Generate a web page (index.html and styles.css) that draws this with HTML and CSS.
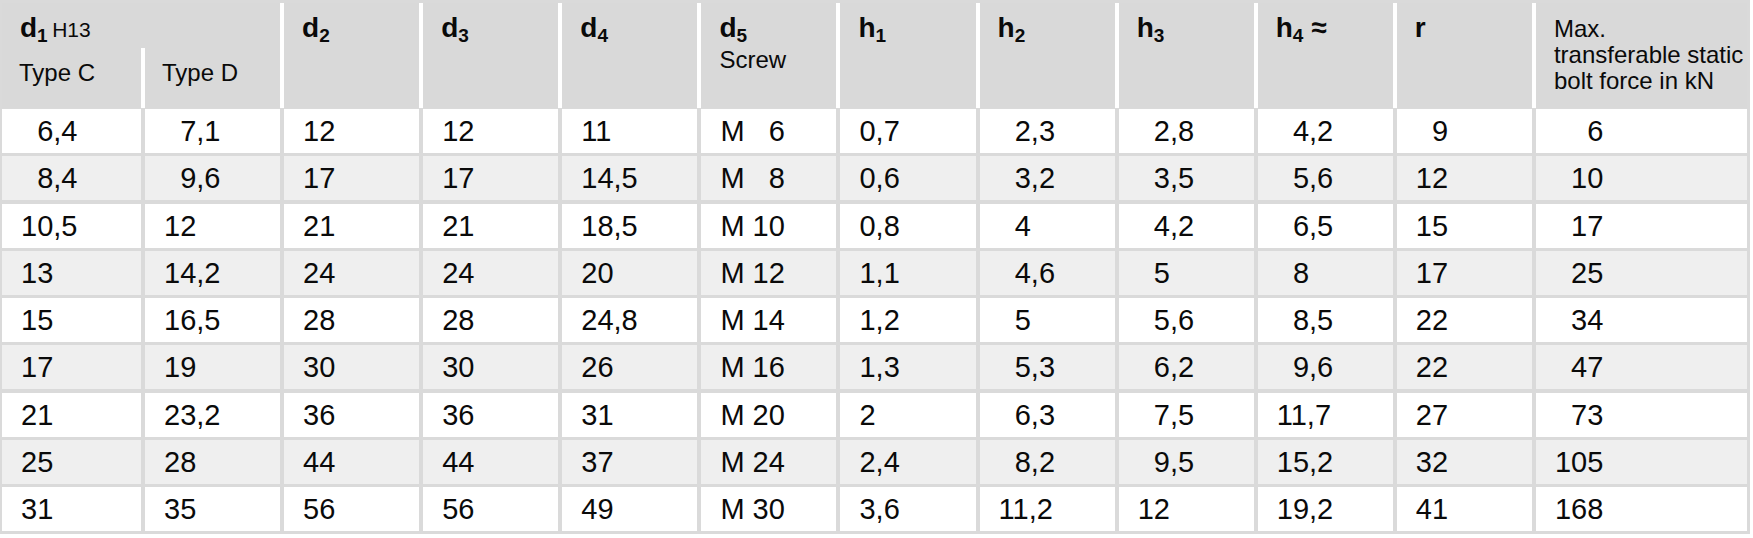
FILE: index.html
```html
<!DOCTYPE html>
<html>
<head>
<meta charset="utf-8">
<link rel="stylesheet" href="styles.css">
</head>
<body>
<div class="tbl">
  <div class="head">
    <div class="hc d1"><span class="lab">d<sub>1</sub></span> <span class="note">H13</span></div>
    <div class="hc sub1">Type C</div>
    <div class="hc sub2">Type D</div>
    <div class="hc tall"><span class="lab">d<sub>2</sub></span></div>
    <div class="hc tall"><span class="lab">d<sub>3</sub></span></div>
    <div class="hc tall"><span class="lab">d<sub>4</sub></span></div>
    <div class="hc tall"><span class="lab">d<sub>5</sub></span><div class="small">Screw</div></div>
    <div class="hc tall"><span class="lab">h<sub>1</sub></span></div>
    <div class="hc tall"><span class="lab">h<sub>2</sub></span></div>
    <div class="hc tall"><span class="lab">h<sub>3</sub></span></div>
    <div class="hc tall"><span class="lab">h<sub class="s4">4</sub> ≈</span></div>
    <div class="hc tall"><span class="lab">r</span></div>
    <div class="hc tall"><div class="small multi">Max.<br>transferable static<br>bolt force in kN</div></div>
  </div>
  <div class="body">
    <div class="c">&#8199;6,4</div><div class="c">&#8199;7,1</div><div class="c">12</div><div class="c">12</div><div class="c">11</div><div class="c">M&#8199; 6</div><div class="c">0,7</div><div class="c">&#8199;2,3</div><div class="c">&#8199;2,8</div><div class="c">&#8199;4,2</div><div class="c">&#8199;9</div><div class="c">&#8199;&#8199;6</div>

    <div class="c a">&#8199;8,4</div><div class="c a">&#8199;9,6</div><div class="c a">17</div><div class="c a">17</div><div class="c a">14,5</div><div class="c a">M&#8199; 8</div><div class="c a">0,6</div><div class="c a">&#8199;3,2</div><div class="c a">&#8199;3,5</div><div class="c a">&#8199;5,6</div><div class="c a">12</div><div class="c a">&#8199;10</div>

    <div class="c">10,5</div><div class="c">12</div><div class="c">21</div><div class="c">21</div><div class="c">18,5</div><div class="c">M 10</div><div class="c">0,8</div><div class="c">&#8199;4</div><div class="c">&#8199;4,2</div><div class="c">&#8199;6,5</div><div class="c">15</div><div class="c">&#8199;17</div>

    <div class="c a">13</div><div class="c a">14,2</div><div class="c a">24</div><div class="c a">24</div><div class="c a">20</div><div class="c a">M 12</div><div class="c a">1,1</div><div class="c a">&#8199;4,6</div><div class="c a">&#8199;5</div><div class="c a">&#8199;8</div><div class="c a">17</div><div class="c a">&#8199;25</div>

    <div class="c">15</div><div class="c">16,5</div><div class="c">28</div><div class="c">28</div><div class="c">24,8</div><div class="c">M 14</div><div class="c">1,2</div><div class="c">&#8199;5</div><div class="c">&#8199;5,6</div><div class="c">&#8199;8,5</div><div class="c">22</div><div class="c">&#8199;34</div>

    <div class="c a">17</div><div class="c a">19</div><div class="c a">30</div><div class="c a">30</div><div class="c a">26</div><div class="c a">M 16</div><div class="c a">1,3</div><div class="c a">&#8199;5,3</div><div class="c a">&#8199;6,2</div><div class="c a">&#8199;9,6</div><div class="c a">22</div><div class="c a">&#8199;47</div>

    <div class="c">21</div><div class="c">23,2</div><div class="c">36</div><div class="c">36</div><div class="c">31</div><div class="c">M 20</div><div class="c">2</div><div class="c">&#8199;6,3</div><div class="c">&#8199;7,5</div><div class="c">11,7</div><div class="c">27</div><div class="c">&#8199;73</div>

    <div class="c a">25</div><div class="c a">28</div><div class="c a">44</div><div class="c a">44</div><div class="c a">37</div><div class="c a">M 24</div><div class="c a">2,4</div><div class="c a">&#8199;8,2</div><div class="c a">&#8199;9,5</div><div class="c a">15,2</div><div class="c a">32</div><div class="c a">105</div>

    <div class="c">31</div><div class="c">35</div><div class="c">56</div><div class="c">56</div><div class="c">49</div><div class="c">M 30</div><div class="c">3,6</div><div class="c">11,2</div><div class="c">12</div><div class="c">19,2</div><div class="c">41</div><div class="c">168</div>
  </div>
</div>
</body>
</html>
```

FILE: styles.css
```css
html, body {
  margin: 0;
  padding: 0;
  background: #ffffff;
}

body {
  font-family: "Liberation Sans", Arial, sans-serif;
  color: #0a0a0a;
}

.tbl {
  width: 1750px;
  box-sizing: border-box;
  padding: 3px 3px 3px 2px;
  background: #dadada;
}

.head {
  display: grid;
  grid-template-columns: 139px repeat(10, 135.1px) 211px;
  grid-template-rows: 45px 60px;
  column-gap: 4px;
  background: #ffffff;
}

.hc {
  background: #d9d9d9;
  padding: 10px 0 0 18px;
  box-sizing: border-box;
  line-height: 30px;
}

.hc.d1 {
  grid-column: 1 / 3;
  grid-row: 1;
}

.hc.sub1 {
  grid-column: 1;
  grid-row: 2;
}

.hc.sub2 {
  grid-column: 2;
  grid-row: 2;
}

.hc.sub1, .hc.sub2 {
  padding-top: 13px;
  padding-left: 17px;
  font-size: 24px;
  line-height: 24px;
}

.hc.tall {
  grid-row: 1 / 3;
}

.lab {
  font-weight: bold;
  font-size: 28px;
}

.lab sub {
  font-size: 19px;
  line-height: 0;
  vertical-align: -5px;
}

.note {
  font-size: 21px;
}

.small {
  font-size: 24px;
  line-height: 26px;
}

.hc .small {
  margin-top: 0;
}

.hc .multi {
  margin-top: 3px;
}

.body {
  display: grid;
  grid-template-columns: 139px repeat(10, 135.1px) 211px;
  grid-auto-rows: 44px;
  column-gap: 4px;
  row-gap: 3.25px;
  margin-top: 1px;
}

.c {
  background: #ffffff;
  font-size: 29px;
  line-height: 44px;
  padding-left: 19px;
  white-space: pre;
}

.c.a {
  background: #efefef;
}
```
